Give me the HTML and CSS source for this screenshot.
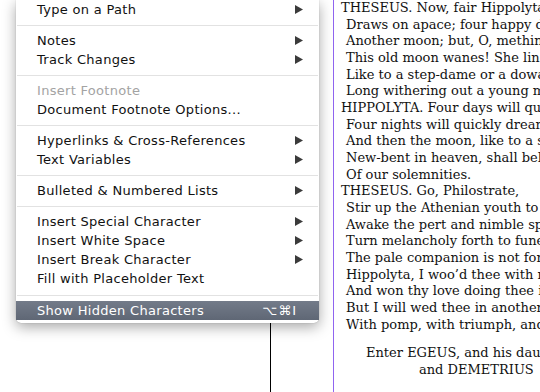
FILE: index.html
```html
<!DOCTYPE html>
<html lang="en">
<head>
    <meta charset="UTF-8">
    <title>Type menu</title>
    <link rel="stylesheet" href="styles.css">
</head>
<body>
    <div class="pasteboard">
        <!-- Context menu (top is cut off by the window) -->
        <div class="menu">
            <div class="item">Type on a Path <svg class="arrow" viewBox="0 0 8 9"><polygon points="0,0 8,4.5 0,9"/></svg></div>
            <div class="sep"></div>
            <div class="item">Notes <svg class="arrow" viewBox="0 0 8 9"><polygon points="0,0 8,4.5 0,9"/></svg></div>
            <div class="item">Track Changes <svg class="arrow" viewBox="0 0 8 9"><polygon points="0,0 8,4.5 0,9"/></svg></div>
            <div class="sep"></div>
            <div class="item disabled">Insert Footnote</div>
            <div class="item">Document Footnote Options...</div>
            <div class="sep"></div>
            <div class="item">Hyperlinks &amp; Cross-References <svg class="arrow" viewBox="0 0 8 9"><polygon points="0,0 8,4.5 0,9"/></svg></div>
            <div class="item">Text Variables <svg class="arrow" viewBox="0 0 8 9"><polygon points="0,0 8,4.5 0,9"/></svg></div>
            <div class="sep"></div>
            <div class="item">Bulleted &amp; Numbered Lists <svg class="arrow" viewBox="0 0 8 9"><polygon points="0,0 8,4.5 0,9"/></svg></div>
            <div class="sep"></div>
            <div class="item">Insert Special Character <svg class="arrow" viewBox="0 0 8 9"><polygon points="0,0 8,4.5 0,9"/></svg></div>
            <div class="item">Insert White Space <svg class="arrow" viewBox="0 0 8 9"><polygon points="0,0 8,4.5 0,9"/></svg></div>
            <div class="item">Insert Break Character <svg class="arrow" viewBox="0 0 8 9"><polygon points="0,0 8,4.5 0,9"/></svg></div>
            <div class="item">Fill with Placeholder Text</div>
            <div class="sep last"></div>
            <div class="item active">Show Hidden Characters <span class="shortcut">⌥⌘I</span></div>
        </div>
        <div class="frame-edge"></div>
    </div>

    <div class="page">
        <p class="speech">THESEUS. Now, fair Hippolyta, our nuptial hour</p>
        <p class="verse">Draws on apace; four happy days bring in</p>
        <p class="verse">Another moon; but, O, methinks, how slow</p>
        <p class="verse">This old moon wanes! She lingers my desires,</p>
        <p class="verse">Like to a step-dame or a dowager,</p>
        <p class="verse">Long withering out a young man's revenue.</p>
        <p class="speech">HIPPOLYTA. Four days will quickly steep themselves in night;</p>
        <p class="verse">Four nights will quickly dream away the time;</p>
        <p class="verse">And then the moon, like to a silver bow</p>
        <p class="verse">New-bent in heaven, shall behold the night</p>
        <p class="verse">Of our solemnities.</p>
        <p class="speech">THESEUS. Go, Philostrate,</p>
        <p class="verse">Stir up the Athenian youth to merriments;</p>
        <p class="verse">Awake the pert and nimble spirit of mirth;</p>
        <p class="verse">Turn melancholy forth to funerals;</p>
        <p class="verse">The pale companion is not for our pomp.</p>
        <p class="verse">Hippolyta, I woo’d thee with my sword,</p>
        <p class="verse">And won thy love doing thee injuries;</p>
        <p class="verse">But I will wed thee in another key,</p>
        <p class="verse">With pomp, with triumph, and with revelling.</p>
        <p class="direction first">Enter EGEUS, and his daughter HERMIA, LYSANDER,</p>
        <p class="direction second">and DEMETRIUS</p>
    </div>
</body>
</html>
```

FILE: styles.css
```css
body {
    margin: 0;
    width: 540px;
    height: 392px;
    overflow: hidden;
    background-color: #fff;
    display: flex;
}
.pasteboard {
    width: 333px;
    flex-shrink: 0;
    display: flex;
    flex-direction: column;
}
.menu {
    position: relative;
    z-index: 2;
    margin-left: 16px;
    width: 303px;
    padding-bottom: 3px;
    background-color: #fff;
    border-radius: 0 0 5px 5px;
    box-shadow: 0 4px 14px rgba(0, 0, 0, 0.35), 0 0 1px rgba(0, 0, 0, 0.35);
    font-family: "DejaVu Sans", sans-serif;
    font-size: 13px;
    letter-spacing: 0.3px;
    color: #111;
}
.item {
    height: 19px;
    line-height: 19px;
    padding: 0 16px 0 21px;
    display: flex;
    justify-content: space-between;
    align-items: center;
    white-space: nowrap;
}
.item.disabled {
    color: #a3a3a3;
}
.item.active {
    color: #fff;
    background: linear-gradient(#737b89, #5f6775);
}
.arrow {
    width: 8px;
    height: 9px;
    fill: #3b3b3b;
}
.shortcut {
    padding-right: 6px;
    letter-spacing: 1px;
}
.sep {
    height: 1px;
    margin: 6px 1px 5px;
    background-color: #e2e2e2;
}
.sep.last {
    margin-top: 7px;
}
.frame-edge {
    flex: 1;
    width: 1px;
    margin-left: 270px;
    background-color: #000;
}
.page {
    border-left: 1px solid #9064f0;
    padding-left: 7px;
    flex-shrink: 0;
    font-family: "DejaVu Serif", serif;
    font-size: 13px;
    line-height: 16.67px;
    color: #111;
}
.page p {
    margin: 0;
    white-space: nowrap;
}
.verse {
    padding-left: 5px;
}
.direction.first {
    padding-top: 12px;
    padding-left: 25px;
}
.direction.second {
    padding-left: 78px;
}
```
